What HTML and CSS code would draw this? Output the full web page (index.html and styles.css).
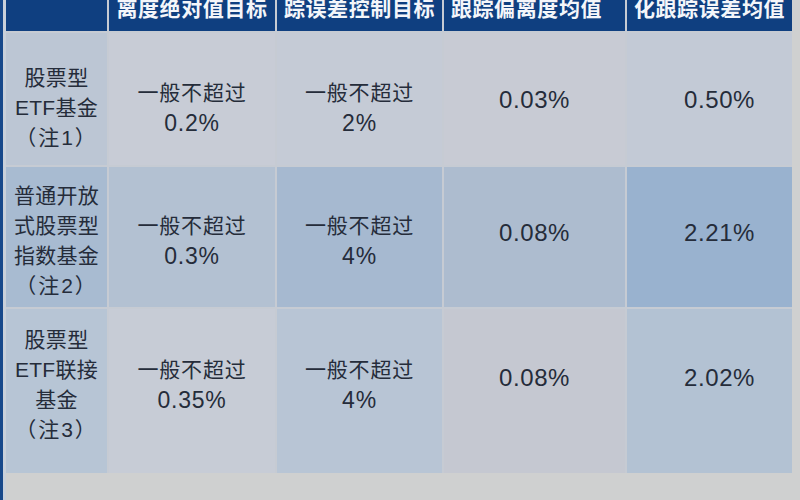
FILE: index.html
```
<!DOCTYPE html>
<html lang="zh-CN">
<head>
<meta charset="utf-8">
<title>跟踪误差对比</title>
<link rel="stylesheet" href="styles.css">
</head>
<body>
<div class="page">
  <div class="edge"></div>
  <div class="table">
    <div class="hd c1"></div>
    <div class="hd c2"><span>离度绝对值目标</span></div>
    <div class="hd c3"><span>踪误差控制目标</span></div>
    <div class="hd c4"><span>跟踪偏离度均值</span></div>
    <div class="hd c5"><span>化跟踪误差均值</span></div>

    <div class="cell r1 c1 name"><span>股票型</span><span>ETF基金</span><span class="note">（注1）</span></div>
    <div class="cell r1 c2"><span>一般不超过</span><span class="num">0.2%</span></div>
    <div class="cell r1 c3"><span>一般不超过</span><span class="num">2%</span></div>
    <div class="cell r1 c4 val"><span>0.03%</span></div>
    <div class="cell r1 c5 val"><span>0.50%</span></div>

    <div class="cell r2 c1 name"><span>普通开放</span><span>式股票型</span><span>指数基金</span><span class="note">（注2）</span></div>
    <div class="cell r2 c2"><span>一般不超过</span><span class="num">0.3%</span></div>
    <div class="cell r2 c3"><span>一般不超过</span><span class="num">4%</span></div>
    <div class="cell r2 c4 val"><span>0.08%</span></div>
    <div class="cell r2 c5 val"><span>2.21%</span></div>

    <div class="cell r3 c1 name"><span>股票型</span><span>ETF联接</span><span>基金</span><span class="note">（注3）</span></div>
    <div class="cell r3 c2"><span>一般不超过</span><span class="num">0.35%</span></div>
    <div class="cell r3 c3"><span>一般不超过</span><span class="num">4%</span></div>
    <div class="cell r3 c4 val"><span>0.08%</span></div>
    <div class="cell r3 c5 val"><span>2.02%</span></div>
  </div>
</div>
</body>
</html>
```

FILE: styles.css
```
* { box-sizing: border-box; }
html, body {
  margin: 0;
  padding: 0;
  background: #cfd0d0;
  width: 800px;
  height: 500px;
  overflow: hidden;
}
.page {
  display: flex;
  height: 500px;
}
.edge {
  width: 6px;
  height: 500px;
  background: linear-gradient(to right, #17488a 0, #17488a 3px, #c9d0da 3px, #c9d0da 6px);
  flex: none;
}
.table {
  display: grid;
  grid-template-columns: 101px 166px 165px 181px 165px;
  grid-template-rows: 31px 132px 140px 164px;
  column-gap: 2px;
  row-gap: 2px;
  background: #c6cbd3;
  align-self: flex-start;
  font-family: "Liberation Sans", "Noto Sans CJK SC", sans-serif;
}
.table > div {
  display: flex;
  flex-direction: column;
  align-items: center;
  justify-content: center;
}
.hd {
  background: #0f3f80;
  color: #f4f6fa;
  font-weight: bold;
  font-size: 21px;
  letter-spacing: 0.6px;
  line-height: 22px;
  padding-bottom: 14px;
}
.hd.c4 { padding-right: 16px; }
.cell {
  color: #252c3a;
  font-size: 21px;
  letter-spacing: 0.8px;
  line-height: 30px;
  text-align: center;
}
.cell span { display: block; white-space: nowrap; }
.cell .num { font-size: 23px; }
.val { font-size: 24px; letter-spacing: 0.6px; }
.name { letter-spacing: 0.3px; }
.name .note { letter-spacing: 2px; }
.c5.val { padding-left: 20px; }

.r1 { padding-top: 18px; }
.r2 { padding-top: 8px; }
.r3 { padding-bottom: 12px; }
.r1.val { padding-top: 2px; }
.r2.val { padding-top: 0; padding-bottom: 8px; }
.r3.val { padding-bottom: 26px; }

.r1.c1 { background: #bcc6d4; }
.r1.c2 { background: #c8ccd6; }
.r1.c3 { background: #c5cbd6; }
.r1.c4 { background: #c8cbd4; }
.r1.c5 { background: #c3cad6; }

.r2.c1 { background: #a8bbd1; }
.r2.c2 { background: #b3c1d2; }
.r2.c3 { background: #a6b9d0; }
.r2.c4 { background: #adbccf; }
.r2.c5 { background: #99b2cf; }

.r3.c1 { background: #b7c5d5; }
.r3.c2 { background: #c7ccd6; }
.r3.c3 { background: #b8c5d5; }
.r3.c4 { background: #c5c8d1; }
.r3.c5 { background: #b3c2d3; }
```
